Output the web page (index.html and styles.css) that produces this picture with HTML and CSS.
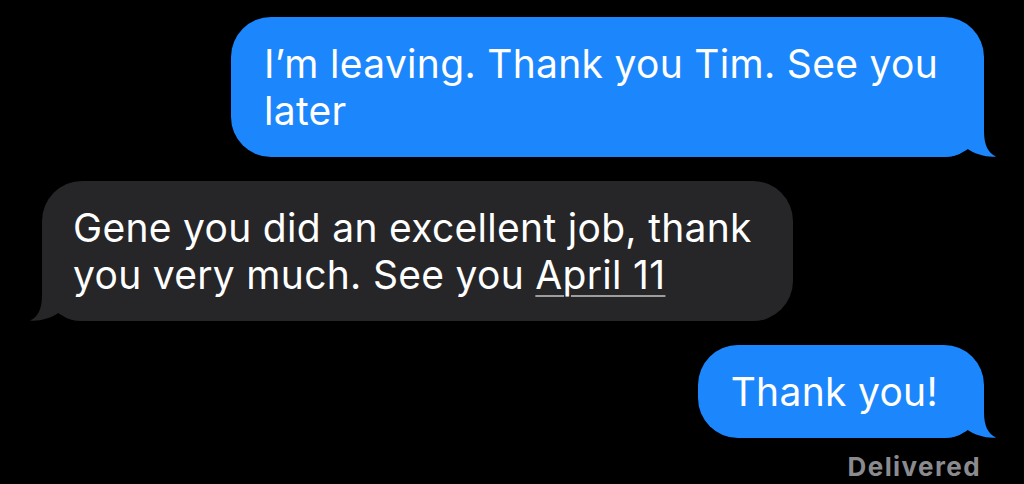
FILE: index.html
```html
<!DOCTYPE html>
<html lang="en">
<head>
<meta charset="utf-8">
<title>Messages</title>
<link rel="stylesheet" href="styles.css">
</head>
<body>
<div class="thread">
  <div class="row sent">
    <div class="bubble blue">I’m leaving. Thank you Tim. See you<br>later<svg class="tail" viewBox="0 0 60 48" width="60" height="48"><path d="M0,0 H44 V22 C44,36 48,44 56,47.5 C48,48.5 36,46 26,39 C22,45 14,48 4,48 H0 Z"/></svg></div>
  </div>
  <div class="row received">
    <div class="bubble gray">Gene you did an excellent job, thank<br>you very much. See you <span class="link">April 11</span><svg class="tail" viewBox="0 0 60 48" width="60" height="48"><path d="M0,0 H44 V22 C44,36 48,44 56,47.5 C48,48.5 36,46 26,39 C22,45 14,48 4,48 H0 Z"/></svg></div>
  </div>
  <div class="row sent">
    <div class="bubble blue">Thank you!<svg class="tail" viewBox="0 0 60 48" width="60" height="48"><path d="M0,0 H44 V22 C44,36 48,44 56,47.5 C48,48.5 36,46 26,39 C22,45 14,48 4,48 H0 Z"/></svg></div>
  </div>
  <div class="status">Delivered</div>
</div>
</body>
</html>
```
FILE: styles.css
```css
html {
  margin: 0;
  padding: 0;
  background: #000;
}
body {
  margin: 0;
  padding: 0;
  width: 1024px;
  height: 484px;
  overflow: hidden;
  font-family: Inter, "Liberation Sans", sans-serif;
  -webkit-font-smoothing: antialiased;
}
.thread {
  display: flex;
  flex-direction: column;
  gap: 24px;
  padding-top: 17px;
}
.row {
  display: flex;
}
.row.sent {
  justify-content: flex-end;
  padding-right: 40px;
}
.row.received {
  justify-content: flex-start;
  padding-left: 42px;
}
.bubble {
  position: relative;
  font-size: 39px;
  line-height: 47px;
  color: #fff;
  white-space: nowrap;
  border-radius: 40px;
  letter-spacing: 0.3px;
}
.bubble.blue {
  background: #1c86fd;
  padding: 23px 46px 23px 33px;
}
.bubble.gray {
  background: #262628;
  padding: 23px 41px 23px 31px;
}
.tail {
  position: absolute;
  bottom: 0;
  display: block;
  z-index: -1;
}
.blue .tail {
  right: -16px;
  fill: #1c86fd;
}
.gray .tail {
  left: -16px;
  fill: #262628;
  transform: scaleX(-1);
}
.link {
  text-decoration: underline;
  text-decoration-color: rgba(255, 255, 255, 0.55);
  text-decoration-thickness: 2px;
  text-underline-offset: 6px;
}
.status {
  margin-top: -9px;
  align-self: flex-end;
  padding-right: 43px;
  font-size: 26px;
  line-height: 28px;
  font-weight: 700;
  letter-spacing: 1.4px;
  color: #8b8b8f;
}
```
